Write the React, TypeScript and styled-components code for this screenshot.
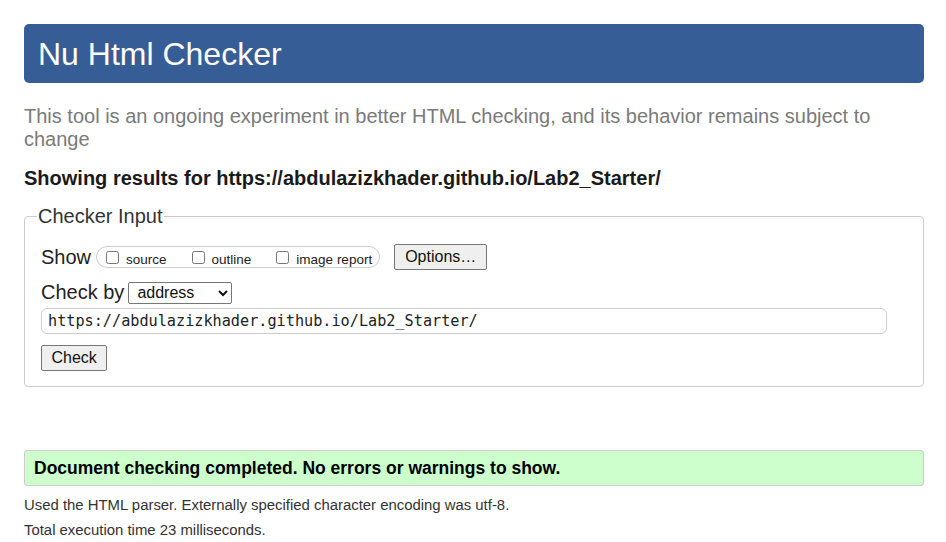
import React from "react";
import styled, { createGlobalStyle } from "styled-components";

const Global = createGlobalStyle`
  html, body { margin: 0; padding: 0; background: #fff; }
  body { font-family: "Liberation Sans", Arial, sans-serif; color: #222; }
`;

const Page = styled.div`
  padding: 24px 22px 0 24px;
  width: 900px;
  box-sizing: content-box;
`;

const Header = styled.h1`
  margin: 0;
  height: 59px;
  line-height: 59px;
  padding: 1px 14px 0;
  box-sizing: border-box;
  background: #365d95;
  color: #fff;
  font-size: 32px;
  font-weight: normal;
  border-radius: 5px;
`;

const About = styled.p`
  margin: 22px 0 0;
  font-size: 20px;
  line-height: 23px;
  color: #7a7a7a;
`;

const Showing = styled.h2`
  margin: 16px 0 0;
  font-size: 20px;
  line-height: 23px;
  font-weight: bold;
  color: #1a1a1a;
`;

const Fieldset = styled.fieldset`
  margin: 15px 0 0;
  border: 1px solid #ccc;
  border-radius: 4px;
  padding: 16px 16px 15px 16px;
  min-width: 0;
`;

const Legend = styled.legend`
  font-size: 20px;
  line-height: 23px;
  padding: 0 1px;
  margin-left: -4px;
  color: #333;
`;

const Row = styled.div<{ $gap?: number }>`
  display: flex;
  align-items: center;
  margin-top: ${(p) => p.$gap ?? 0}px;
`;

const RowLabel = styled.span`
  font-size: 20px;
  line-height: 23px;
  color: #222;
`;

const Group = styled.span`
  display: flex;
  align-items: flex-start;
  gap: 21px;
  height: 22px;
  box-sizing: border-box;
  margin-left: 5px;
  padding: 0 7px 0 5px;
  border: 1px solid #ccc;
  border-radius: 11px;
`;

const CheckLabel = styled.label`
  display: block;
  font-size: 13.5px;
  line-height: 20px;
  margin-top: 1px;
  color: #222;
  white-space: nowrap;
`;

const Box = styled.input`
  width: 13px;
  height: 13px;
  margin: 3px 7px 3px 4px;
  vertical-align: baseline;
`;

const Button = styled.button<{ $ml?: number; $px?: number }>`
  height: 26px;
  box-sizing: border-box;
  margin: 0 0 0 ${(p) => p.$ml ?? 0}px;
  padding: 0 ${(p) => p.$px ?? 9.5}px;
  font-family: "Liberation Sans", Arial, sans-serif;
  font-size: 16px;
  color: #111;
  background: #efefef;
  border: 1px solid #767676;
  border-radius: 2px;
`;

const Select = styled.select`
  width: 104px;
  height: 22px;
  box-sizing: border-box;
  margin-left: 4px;
  padding: 0 2px 0 4px;
  font-family: "Liberation Sans", Arial, sans-serif;
  font-size: 16px;
  color: #111;
  background: #fff;
  border: 1px solid #767676;
  border-radius: 2px;
`;

const UrlInput = styled.input`
  display: block;
  width: 846px;
  height: 26px;
  box-sizing: border-box;
  margin: 4px 0 0;
  padding: 0 6px;
  font-family: "DejaVu Sans Mono", "Liberation Mono", monospace;
  font-size: 15.2px;
  color: #222;
  border: 1px solid #ccc;
  border-radius: 6px;
  outline: none;
`;

const Success = styled.p`
  margin: 63px 0 0;
  height: 36px;
  box-sizing: border-box;
  line-height: 34px;
  padding: 0 9px;
  background: #ccffcc;
  border: 1px solid #ccc;
  border-radius: 3px;
  font-size: 17.5px;
  font-weight: bold;
  color: #000;
`;

const Details = styled.div`
  display: flex;
  flex-direction: column;
  gap: 8px;
  margin-top: 11px;
`;

const Detail = styled.p`
  margin: 0;
  font-size: 14.9px;
  line-height: 17px;
  color: #333;
`;

export default function App() {
  return (
    <>
      <Global />
      <Page>
        <Header>Nu Html Checker</Header>
        <About>
          This tool is an ongoing experiment in better HTML checking, and its
          behavior remains subject to change
        </About>
        <Showing>
          Showing results for https://abdulazizkhader.github.io/Lab2_Starter/
        </Showing>
        <Fieldset>
          <Legend>Checker Input</Legend>
          <Row>
            <RowLabel>Show</RowLabel>
            <Group>
              <CheckLabel>
                <Box type="checkbox" />source
              </CheckLabel>
              <CheckLabel>
                <Box type="checkbox" />outline
              </CheckLabel>
              <CheckLabel>
                <Box type="checkbox" />image report
              </CheckLabel>
            </Group>
            <Button type="button" $ml={14} $px={10}>
              Options…
            </Button>
          </Row>
          <Row $gap={11}>
            <RowLabel>Check by</RowLabel>
            <Select defaultValue="address">
              <option value="address">address</option>
              <option value="upload">file upload</option>
              <option value="text">text input</option>
            </Select>
          </Row>
          <UrlInput
            type="url"
            defaultValue="https://abdulazizkhader.github.io/Lab2_Starter/"
          />
          <Row $gap={11}>
            <Button type="submit">Check</Button>
          </Row>
        </Fieldset>
        <Success>Document checking completed. No errors or warnings to show.</Success>
        <Details>
          <Detail>
            Used the HTML parser. Externally specified character encoding was
            utf-8.
          </Detail>
          <Detail>Total execution time 23 milliseconds.</Detail>
        </Details>
      </Page>
    </>
  );
}
